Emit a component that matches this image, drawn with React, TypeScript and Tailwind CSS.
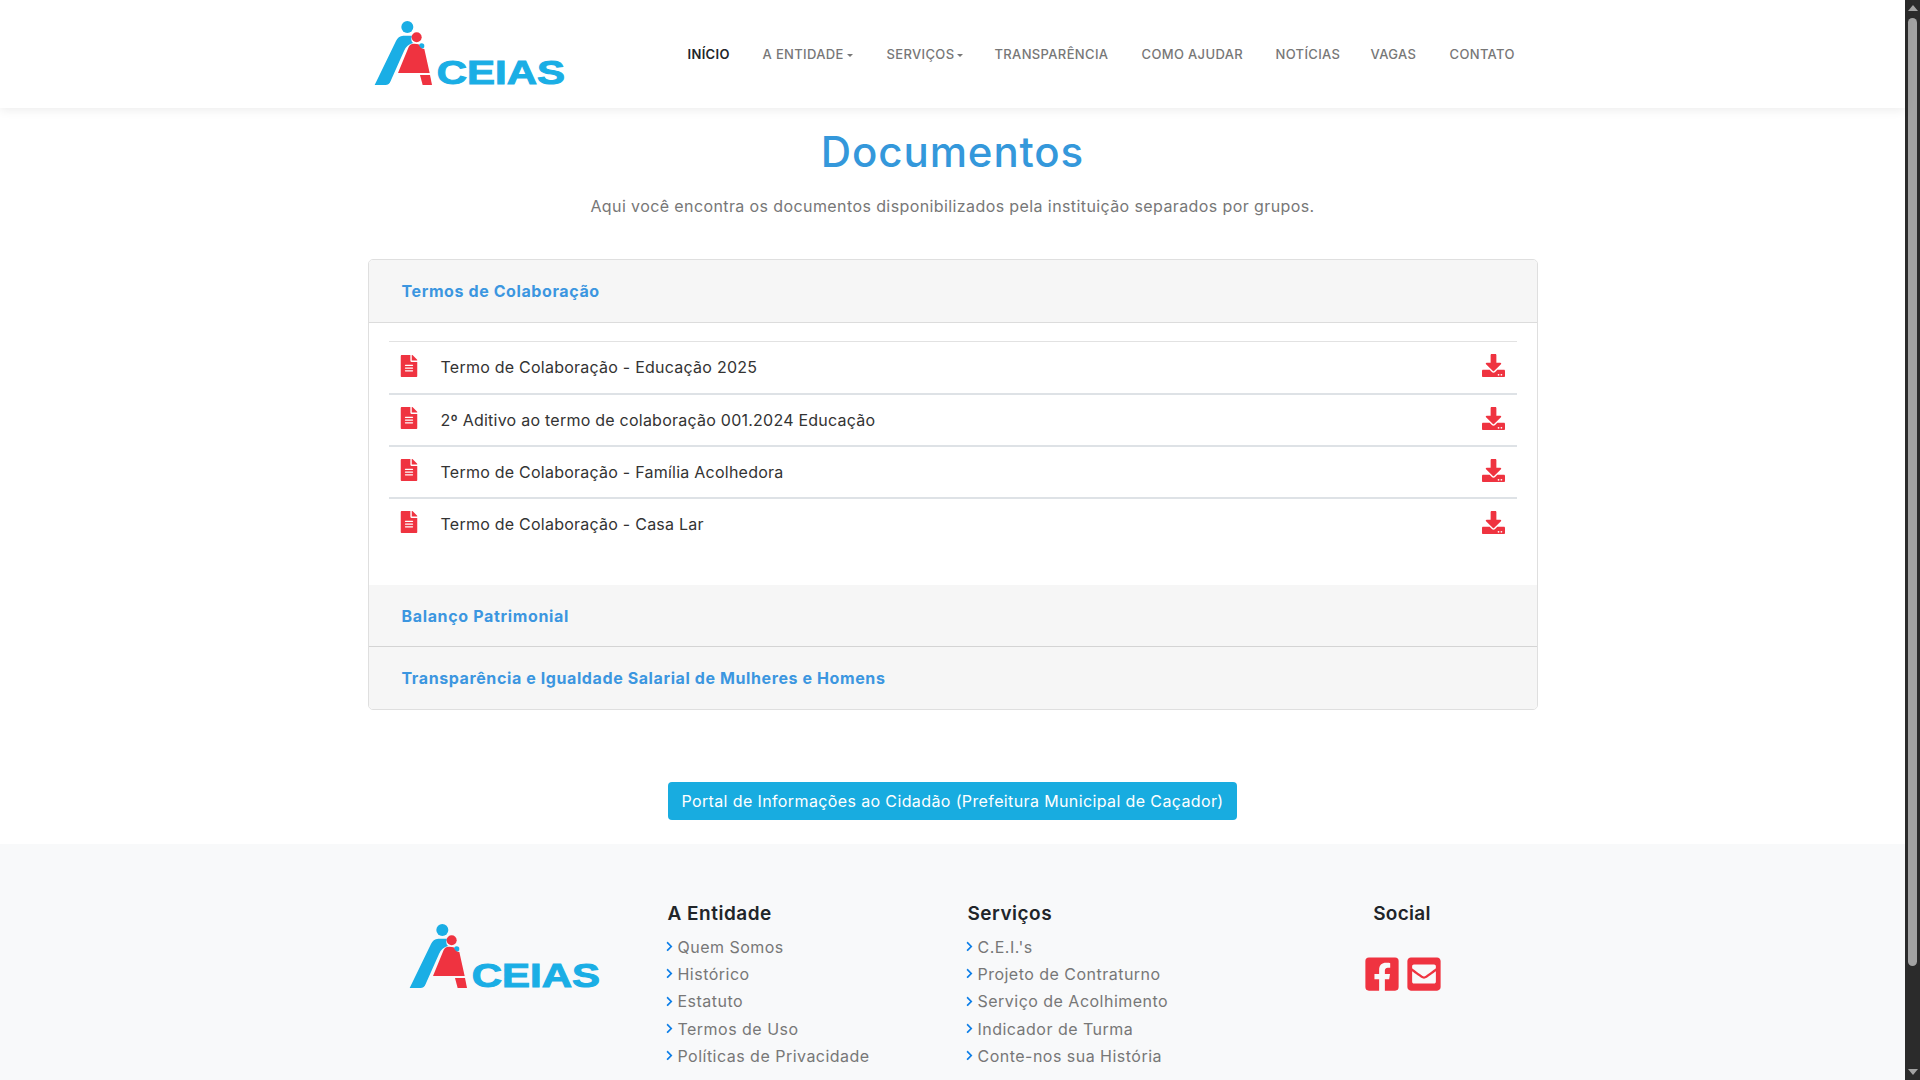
import { FaFileAlt, FaDownload, FaFacebookSquare, FaEnvelopeSquare, FaChevronRight } from "react-icons/fa";

const font = { fontFamily: "Inter, 'Open Sans', sans-serif" };

function Logo({ className }: { className?: string }) {
  return (
    <svg width="200" height="80" viewBox="30 50 600 240" className={`block shrink-0 ${className ?? ""}`}>
      <circle cx="142" cy="80" r="18" fill="#1aaee5" />
      <path d="M44 254 L108 122 Q114 107 130 106 L156 106 Q150 122 160 128 Q140 132 132 152 L92 242 Q88 254 76 254 Z" fill="#1aaee5" />
      <circle cx="170" cy="111" r="15" fill="#ef3340" />
      <circle cx="185" cy="137" r="8" fill="#1aaee5" />
      <path d="M114 218 L146 140 Q150 130 162 130 L176 132 Q180 146 193 146 L209 218 Z" fill="#ef3340" />
      <path d="M180 224 L210 224 L216 254 L188 254 Z" fill="#ef3340" />
      <text x="230" y="252" fontFamily="'Liberation Sans', sans-serif" fontWeight="700" fontSize="100" textLength="385" lengthAdjust="spacingAndGlyphs" fill="#1aaee5" stroke="#1aaee5" strokeWidth="3">CEIAS</text>
    </svg>
  );
}

const nav = [
  ["INÍCIO", false, "w-[43px]"],
  ["A ENTIDADE", true, "w-[92px]"],
  ["SERVIÇOS", true, "w-[76px]"],
  ["TRANSPARÊNCIA", false, "w-[115px]"],
  ["COMO AJUDAR", false, "w-[102px]"],
  ["NOTÍCIAS", false, "w-[63px]"],
  ["VAGAS", false, "w-[47px]"],
  ["CONTATO", false, "w-[65px]"],
] as const;

const docs = [
  "Termo de Colaboração - Educação 2025",
  "2º Aditivo ao termo de colaboração 001.2024 Educação",
  "Termo de Colaboração - Família Acolhedora",
  "Termo de Colaboração - Casa Lar",
];

function FooterList({ title, items, className }: { title: string; items: string[]; className: string }) {
  return (
    <div className={className}>
      <h4 className="text-[19px] leading-[22px] font-semibold text-[#212529] tracking-[0.5px] ml-[1px] mb-[8px]">{title}</h4>
      <ul className="flex flex-col">
        {items.map((t) => (
          <li key={t} className="h-[27.3px] flex items-center text-[16px] text-[#777777] tracking-[0.48px]">
            <FaChevronRight className="text-[#0d7fe8] text-[11px] -ml-[3px] shrink-0" />
            <span className="ml-[3px]">{t}</span>
          </li>
        ))}
      </ul>
    </div>
  );
}

export default function App() {
  return (
    <div className="flex h-screen w-full overflow-hidden bg-white" style={font}>
      <div className="flex-1 min-w-0 h-full flex flex-col">
        <header className="h-[108px] shrink-0 bg-white shadow-[0_2px_10px_rgba(0,0,0,0.08)] relative z-10">
          <div className="w-[1170px] mx-auto flex items-center h-full pl-[2px]">
            <Logo className="mt-[5px]" />
            <nav className="flex gap-[32px] ml-[118px] mt-[2px] text-[13px] font-medium text-[#777777] items-center">
              {nav.map(([t, caret, w], i) => (
                <span key={t} className={`${w} min-w-0 shrink-0 flex items-center whitespace-nowrap tracking-[0.35px] ${i === 0 ? "text-[#212529] font-semibold" : ""}`}>
                  {t}
                  {caret && <span className="ml-[3px] inline-block border-x-[3px] border-t-[3px] border-x-transparent border-t-[#777777]" />}
                </span>
              ))}
            </nav>
          </div>
        </header>

        <main className="shrink-0 flex flex-col items-center">
          <h1 className="text-[42px] leading-[48px] font-medium text-[#3498db] mt-[20px] tracking-[0.9px]">Documentos</h1>
          <p className="mt-[18px] text-[16px] leading-[24px] text-[#777777] tracking-[0.4px]">
            Aqui você encontra os documentos disponibilizados pela instituição separados por grupos.
          </p>

          <section className="mt-[41px] w-[1170px] rounded-[5px] border border-[#dfdfdf] overflow-hidden">
            <div className="h-[63px] bg-[#f6f6f6] border-b border-[#dcdcdc] flex items-center pl-[33px] pb-[1px] text-[16px] font-bold text-[#3c96e0] tracking-[0.6px]">
              Termos de Colaboração
            </div>
            <div className="h-[262px] pt-[18px] px-[20px]">
              {docs.map((d, i) => (
                <div
                  key={d}
                  className={`h-[52px] flex items-center border-[#dee2e6] pb-[1px] ${i === 0 ? "border-t border-t-[#e2e2e2]" : "border-t-2"}`}
                >
                  <FaFileAlt className="text-[#ef3340] text-[22px] ml-[9px] -mt-[3px] shrink-0" />
                  <span className="ml-[21px] flex-1 text-[16px] text-[#333333] tracking-[0.24px]">{d}</span>
                  <FaDownload className="text-[#ef3340] text-[23px] mr-[12px] -mt-[3px] shrink-0" />
                </div>
              ))}
            </div>
            <div className="h-[62px] bg-[#f6f6f6] border-b border-[#d4d4d4] flex items-center pl-[33px] text-[16px] font-bold text-[#3c96e0] tracking-[0.65px]">
              Balanço Patrimonial
            </div>
            <div className="h-[62px] bg-[#f6f6f6] flex items-center pl-[33px] text-[16px] font-bold text-[#3c96e0] tracking-[0.6px]">
              Transparência e Igualdade Salarial de Mulheres e Homens
            </div>
          </section>

          <a className="mt-[72px] mb-[24px] h-[38px] w-[569px] rounded-[4px] bg-[#18ace0] text-white text-[16px] flex items-center justify-center tracking-[0.38px]">
            Portal de Informações ao Cidadão (Prefeitura Municipal de Caçador)
          </a>
        </main>

        <footer className="flex-1 bg-[#f8f9fa]">
          <div className="w-[1170px] mx-auto flex pt-[59px]">
            <div className="w-[299px] pl-[37px] pt-[17px] shrink-0">
              <Logo />
            </div>
            <FooterList
              className="w-[300px] shrink-0"
              title="A Entidade"
              items={["Quem Somos", "Histórico", "Estatuto", "Termos de Uso", "Políticas de Privacidade"]}
            />
            <FooterList
              className="w-[300px] shrink-0"
              title="Serviços"
              items={["C.E.I.'s", "Projeto de Contraturno", "Serviço de Acolhimento", "Indicador de Turma", "Conte-nos sua História"]}
            />
            <div className="w-[271px] flex flex-col items-center">
              <h4 className="text-[19px] leading-[22px] font-semibold text-[#212529] tracking-[0.3px]">Social</h4>
              <div className="flex gap-[4px] mt-[30px] ml-[2px] text-[#ef3340] text-[38px]">
                <FaFacebookSquare />
                <FaEnvelopeSquare />
              </div>
            </div>
          </div>
        </footer>
      </div>

      <aside className="w-[15px] h-full shrink-0 bg-[#2b2b2b] flex flex-col items-center">
        <div className="mt-[5px] w-0 h-0 border-x-[5px] border-b-[6px] border-x-transparent border-b-[#a3a3a3]" />
        <div className="mt-[7px] w-[9px] h-[948px] rounded-[5px] bg-[#a3a3a3]" />
        <div className="mt-auto mb-[5px] w-0 h-0 border-x-[5px] border-t-[6px] border-x-transparent border-t-[#a3a3a3]" />
      </aside>
    </div>
  );
}
